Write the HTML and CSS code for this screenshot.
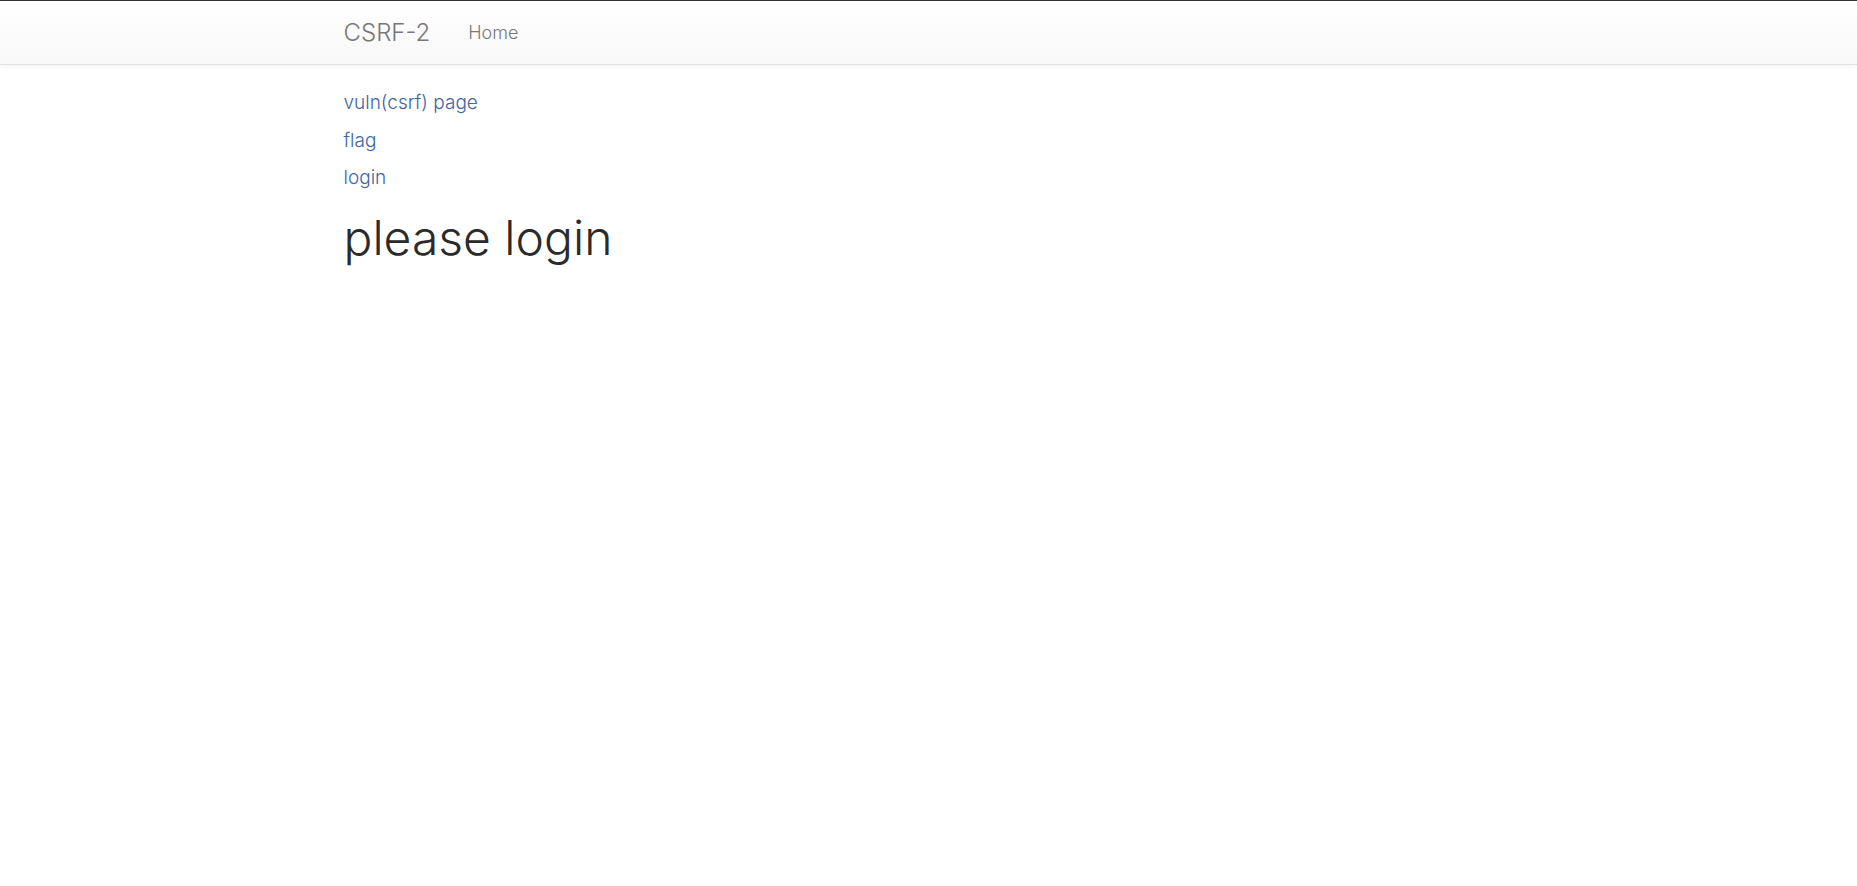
FILE: index.html
```html
<!DOCTYPE html>
<html>
<head>
<meta charset="utf-8">
<title>CSRF-2</title>
<link rel="stylesheet" href="styles.css">
</head>
<body>
<nav class="navbar">
  <div class="container nav-inner">
    <a class="brand" href="#">CSRF-2</a>
    <a class="nav-link" href="#">Home</a>
  </div>
</nav>
<main class="container content">
  <ul class="links">
    <li><a href="#">vuln(csrf) page</a></li>
    <li><a href="#">flag</a></li>
    <li><a href="#">login</a></li>
  </ul>
  <h1 class="title">please login</h1>
</main>
</body>
</html>
```
FILE: styles.css
```css
html, body {
  margin: 0;
  padding: 0;
}
body {
  font-family: Inter, "Liberation Sans", Arial, sans-serif;
  color: #333;
  background: #fff;
  border-top: 1px solid #333;
}
a {
  text-decoration: none;
}
.container {
  width: 1170px;
  margin: 0 auto;
  box-sizing: border-box;
}
.navbar {
  height: 64px;
  box-sizing: border-box;
  background: linear-gradient(to bottom, #ffffff 0%, #f8f8f8 100%);
  border-bottom: 1px solid #e2e2e2;
  box-shadow: 0 1px 6px rgba(0, 0, 0, 0.06);
}
.nav-inner {
  display: flex;
  align-items: center;
  height: 63px;
}
.brand {
  font-size: 24px;
  font-weight: 300;
  color: #777;
  margin-right: 38px;
}
.nav-link {
  font-size: 18px;
  font-weight: 300;
  color: #777;
}
.content {
  padding-top: 19px;
}
.links {
  list-style: none;
  margin: 0;
  padding: 0;
}
.links li {
  font-size: 19px;
  font-weight: 300;
  line-height: 37.5px;
}
.links a {
  color: #40659f;
}
.title {
  font-size: 48px;
  font-weight: 300;
  margin: 12px 0 0;
  line-height: 1.2;
  color: #2a2a2a;
}
```
